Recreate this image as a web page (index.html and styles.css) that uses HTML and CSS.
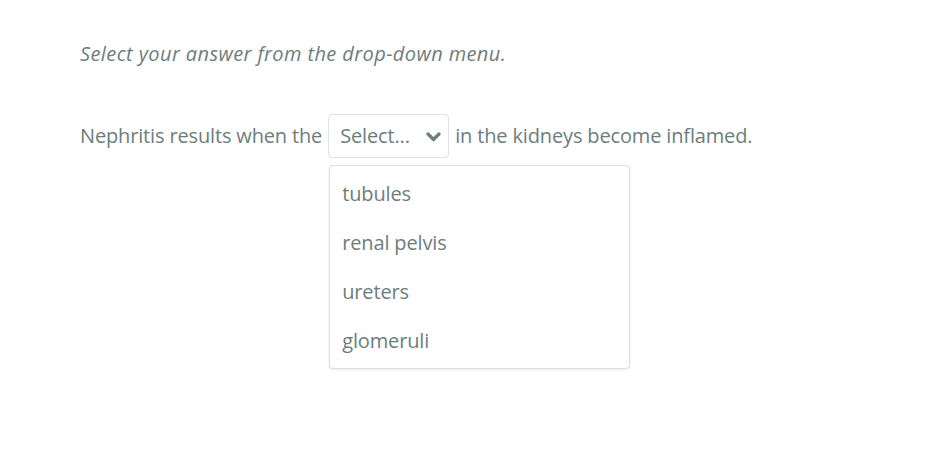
FILE: index.html
```html
<!DOCTYPE html>
<html>
<head>
<meta charset="utf-8">
<link rel="stylesheet" href="styles.css">
</head>
<body>
<div class="page">
  <div class="instruction">Select your answer from the drop-down menu.</div>
  <div class="question">
    <span>Nephritis results when the</span>
    <div class="select-wrap">
      <div class="select">
        <span class="select-label">Select...</span>
        <svg class="chev" width="15" height="11" viewBox="0 0 15 11"><path d="M2 3 L7.5 8.5 L13 3" fill="none" stroke="#6c7e7b" stroke-width="3.2" stroke-linecap="round" stroke-linejoin="round"/></svg>
      </div>
      <ul class="menu">
        <li>tubules</li>
        <li>renal pelvis</li>
        <li>ureters</li>
        <li>glomeruli</li>
      </ul>
    </div>
    <span>in the kidneys become inflamed.</span>
  </div>
</div>
</body>
</html>
```
FILE: styles.css
```css
html, body { margin: 0; padding: 0; background: #fff; }
body {
  font-family: "Open Sans", "Noto Sans", sans-serif;
  color: #6c7e7b;
  font-size: 20px;
  min-height: 476px;
}
.page { padding: 30px 80px; min-height: 416px; }
.instruction {
  font-style: italic;
  line-height: 48px;
  letter-spacing: 0.4px;
}
.question {
  margin-top: 36px;
  display: flex;
  align-items: center;
  gap: 6px;
  line-height: 28px;
  letter-spacing: -0.15px;
}
.select-wrap { position: relative; }
.select {
  display: flex;
  align-items: center;
  box-sizing: border-box;
  width: 121px;
  height: 44px;
  padding: 0 7px 0 11px;
  border: 1px solid #dfe3e3;
  border-radius: 4px;
  justify-content: space-between;
}
.chev { display: block; }
.menu {
  position: absolute;
  left: 1px;
  top: 51px;
  width: 301px;
  box-sizing: border-box;
  margin: 0;
  padding: 3px 0 3px;
  list-style: none;
  background: #fff;
  border: 1px solid #dcdfdf;
  border-radius: 4px;
  box-shadow: 0 1px 3px rgba(0,0,0,0.08);
}
.menu li {
  padding: 0 12px;
  line-height: 49px;
}
```
